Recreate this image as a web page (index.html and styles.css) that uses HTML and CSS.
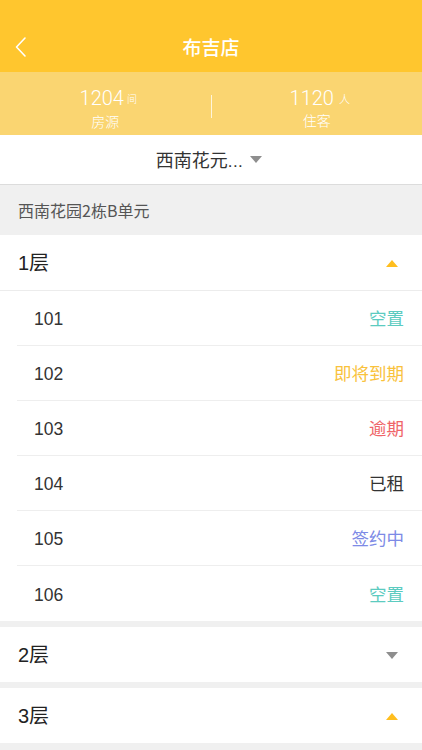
FILE: index.html
```html
<!DOCTYPE html>
<html lang="zh-CN">
<head>
<meta charset="utf-8">
<title>布吉店</title>
<link rel="stylesheet" href="styles.css">
</head>
<body>
<div class="app">
  <header class="topbar">
    <div class="nav">
      <svg class="back" width="14" height="22" viewBox="0 0 14 22"><path d="M11 2 L2.5 11 L11 20" fill="none" stroke="#fff" stroke-width="1.6" stroke-linecap="round" stroke-linejoin="round"/></svg>
      <h1 class="title">布吉店</h1>
    </div>
  </header>
  <section class="stats">
    <div class="stat">
      <div class="stat-num">1204<span class="unit">间</span></div>
      <div class="stat-label">房源</div>
    </div>
    <div class="divider"></div>
    <div class="stat">
      <div class="stat-num">1120<span class="unit unit-wide">人</span></div>
      <div class="stat-label">住客</div>
    </div>
  </section>
  <div class="picker">
    <span class="picker-text">西南花元<span class="dots">...</span></span>
    <span class="tri tri-down tri-gray"></span>
  </div>
  <div class="section-label">西南花园2栋B单元</div>

  <div class="floor">
    <div class="floor-head">
      <span class="floor-name">1层</span>
      <span class="tri tri-up tri-yellow"></span>
    </div>
    <ul class="rooms">
      <li class="room"><span class="room-no">101</span><span class="status s-empty">空置</span></li>
      <li class="room"><span class="room-no">102</span><span class="status s-soon">即将到期</span></li>
      <li class="room"><span class="room-no">103</span><span class="status s-late">逾期</span></li>
      <li class="room"><span class="room-no">104</span><span class="status s-rent">已租</span></li>
      <li class="room"><span class="room-no">105</span><span class="status s-sign">签约中</span></li>
      <li class="room"><span class="room-no">106</span><span class="status s-empty">空置</span></li>
    </ul>
  </div>
  <div class="floor">
    <div class="floor-head">
      <span class="floor-name">2层</span>
      <span class="tri tri-down tri-gray"></span>
    </div>
  </div>
  <div class="floor">
    <div class="floor-head">
      <span class="floor-name">3层</span>
      <span class="tri tri-up tri-yellow"></span>
    </div>
  </div>
</div>
</body>
</html>
```

FILE: styles.css
```css
* { box-sizing: border-box; margin: 0; padding: 0; }
html, body { background: #f0f0f0; }
body {
  font-family: "Liberation Sans", "Noto Sans CJK SC", sans-serif;
  color: #333;
  width: 422px;
  height: 750px;
  overflow: hidden;
}
.app { display: flex; flex-direction: column; }

.topbar {
  background: #ffc62e;
  height: 72px;
  padding-top: 20px;
}
.nav {
  position: relative;
  height: 52px;
  display: flex;
  align-items: center;
  justify-content: center;
}
.back {
  position: absolute;
  left: 14px;
  top: 16px;
}
.title {
  font-family: "Noto Sans CJK SC", sans-serif;
  font-size: 19px;
  font-weight: 500;
  color: #fff;
  line-height: 1;
  margin-top: 0;
}

.stats {
  background: #fad571;
  height: 63px;
  display: flex;
  align-items: center;
}
.stat {
  flex: 1;
  display: flex;
  flex-direction: column;
  align-items: center;
  color: #fff;
}
.stat-num {
  font-family: "Roboto", "Liberation Sans", sans-serif;
  font-weight: 300;
  font-size: 20px;
  line-height: 22px;
  margin-top: 8px;
  padding-left: 6px;
}
.unit {
  font-family: "Noto Sans CJK SC", sans-serif;
  font-size: 10px;
  margin-left: 3px;
  vertical-align: 2px;
}
.unit-wide { margin-left: 5px; font-size: 11px; }
.stat-label {
  font-family: "Noto Sans CJK SC", sans-serif;
  font-weight: 300;
  font-size: 14px;
  line-height: 16px;
  margin-top: 3px;
}
.divider {
  width: 1px;
  height: 23px;
  background: rgba(255, 255, 255, 0.75);
  margin-top: 6px;
}

.picker {
  background: #fff;
  height: 50px;
  border-bottom: 1px solid #dcdcdc;
  display: flex;
  align-items: center;
  justify-content: center;
  gap: 7px;
  padding-right: 4px;
}
.picker-text {
  font-family: "Noto Sans CJK SC", sans-serif;
  font-size: 18px;
  line-height: 1;
  color: #333;
}
.dots {
  font-family: "Liberation Sans", sans-serif;
  font-size: 17px;
  letter-spacing: 0.5px;
}

.tri {
  display: inline-block;
  width: 0;
  height: 0;
  border-left: 6px solid transparent;
  border-right: 6px solid transparent;
}
.tri-down { border-top: 7px solid #8e8e8e; }
.tri-up { border-bottom: 7px solid #ffbe1e; }

.section-label {
  height: 50px;
  background: #f0f0f0;
  display: flex;
  align-items: center;
  padding-left: 18px;
  font-family: "Noto Sans CJK SC", sans-serif;
  font-size: 16px;
  color: #555;
}

.floor {
  background: #fff;
  margin-bottom: 6px;
}
.floor-head {
  height: 55px;
  display: flex;
  align-items: center;
  justify-content: space-between;
  padding: 0 24px 0 18px;
}
.floor-head .tri { margin-top: 2px; }
.floor-name {
  font-size: 20px;
  color: #222;
  line-height: 1;
}
.rooms {
  list-style: none;
  border-top: 1px solid #ececec;
  padding-left: 17px;
}
.room {
  height: 55px;
  display: flex;
  align-items: center;
  justify-content: space-between;
  padding: 0 18px 0 17px;
  border-bottom: 1px solid #eeeeee;
}
.room:last-child { border-bottom: none; }
.room-no {
  font-size: 17.5px;
  line-height: 20px;
  color: #333;
  margin-top: 2px;
}
.status {
  font-family: "Noto Sans CJK SC", sans-serif;
  font-size: 17.5px;
  line-height: 20px;
}
.s-empty { color: #5ccbc0; }
.s-soon { color: #f9c23c; }
.s-late { color: #ef6468; }
.s-rent { color: #333; }
.s-sign { color: #7d8ae6; }
```
